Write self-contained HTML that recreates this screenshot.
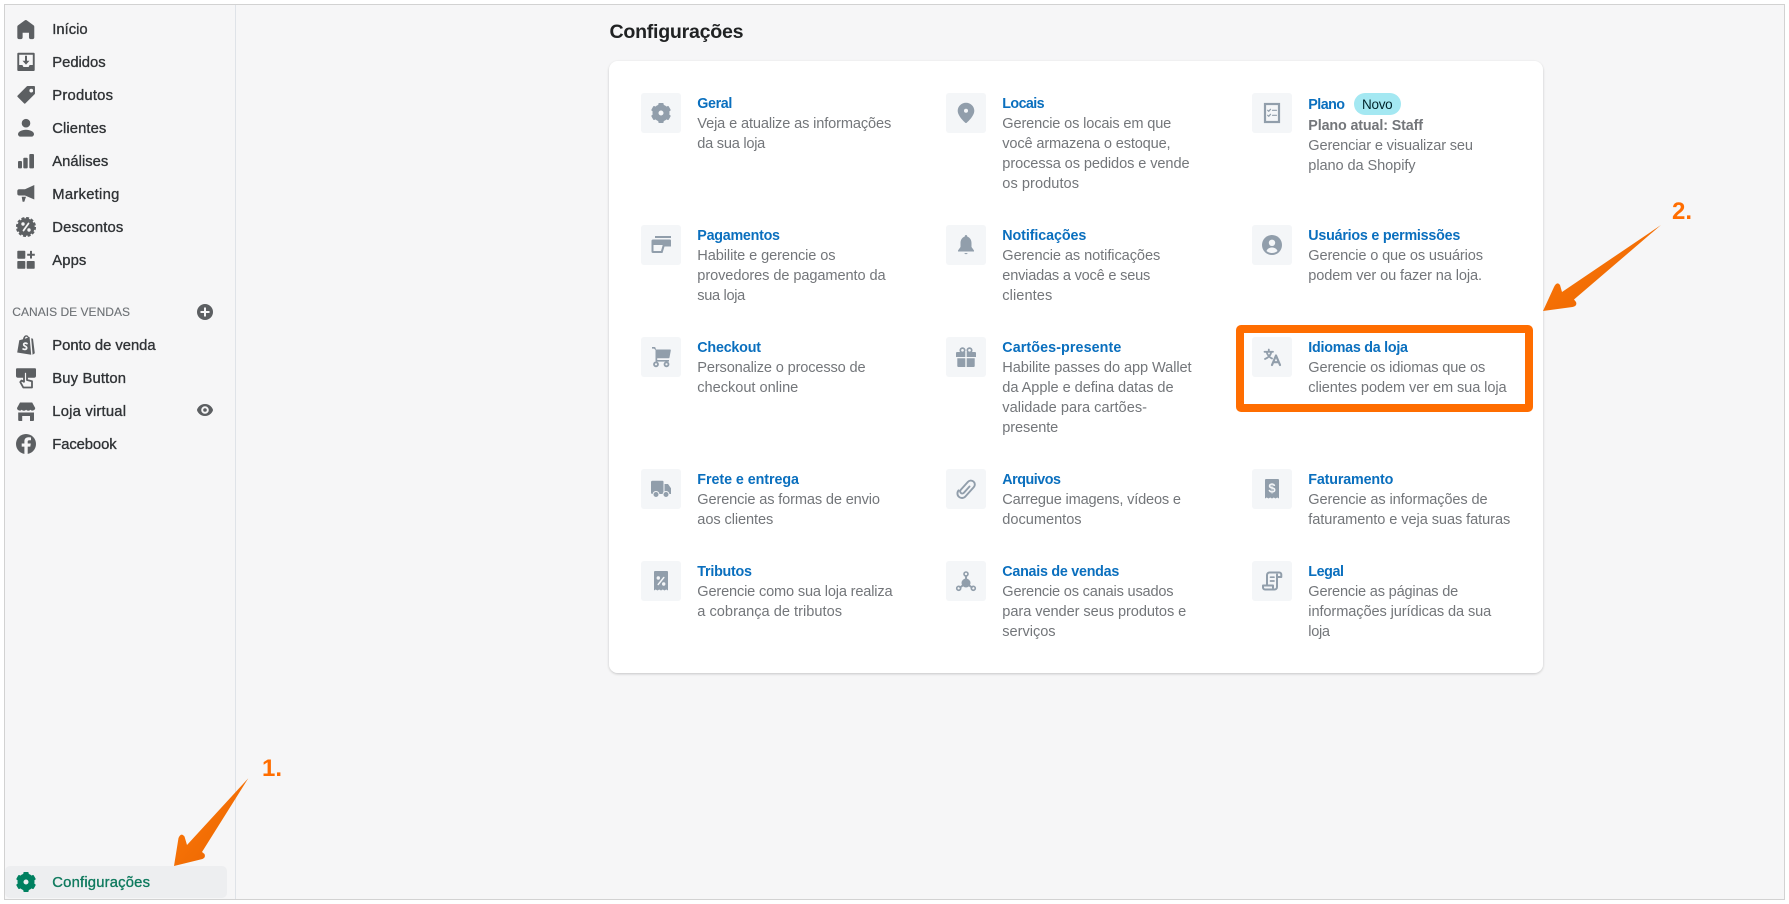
<!DOCTYPE html>
<html lang="pt-BR">
<head>
<meta charset="utf-8">
<title>Configurações</title>
<style>
html,body{margin:0;padding:0;background:#fff;width:1789px;height:904px;overflow:hidden}
svg{display:block;filter:blur(.35px)}
text{font-family:"Liberation Sans",Arial,sans-serif;white-space:pre}
.n{font-size:14.8px;fill:#303336;stroke:#303336;stroke-width:.34px}
.g{font-size:14.8px;fill:#0f7a5e;stroke:#0f7a5e;stroke-width:.34px}
.s{font-size:12px;fill:#6d7175;stroke:#6d7175;stroke-width:.12px}
.t{font-size:14.3px;fill:#0a6fbe;font-weight:700}
.d{font-size:14.6px;fill:#73767a}
.b{font-size:14.3px;fill:#73767a;font-weight:700}
.h{font-size:19.6px;fill:#202223;font-weight:700}
.o{font-size:24px;fill:#ff6d00;font-weight:700}
.ni{fill:#5c5f62}
.ti{fill:#919eab}
.tile{fill:#f4f6f8}
.ln{fill:none;stroke:#919eab;stroke-linecap:round;stroke-linejoin:round}
</style>
</head>
<body>
<svg width="1789" height="904" viewBox="0 0 1789 904" xmlns="http://www.w3.org/2000/svg">
<defs>
<g id="gear">
<circle cx="0" cy="0" r="5.500" fill="none" stroke="currentColor" stroke-width="6"/>
<g fill="currentColor">
<rect x="-2.700" y="-10" width="5.400" height="4.500" rx="1"/>
<rect x="-2.700" y="-10" width="5.400" height="4.500" rx="1" transform="rotate(60)"/>
<rect x="-2.700" y="-10" width="5.400" height="4.500" rx="1" transform="rotate(120)"/>
<rect x="-2.700" y="-10" width="5.400" height="4.500" rx="1" transform="rotate(180)"/>
<rect x="-2.700" y="-10" width="5.400" height="4.500" rx="1" transform="rotate(240)"/>
<rect x="-2.700" y="-10" width="5.400" height="4.500" rx="1" transform="rotate(300)"/>
</g>
</g>
<filter id="sh" x="-2%" y="-2%" width="104%" height="104%"><feDropShadow dx="0" dy="1" stdDeviation="1.200" flood-color="#000" flood-opacity=".2"/></filter>
<linearGradient id="ar1" x1="0" y1="0" x2="1" y2="1"><stop offset="0" stop-color="#ff7a0a"/><stop offset="1" stop-color="#e86400"/></linearGradient>
</defs>

<!-- frame -->
<rect x="4.500" y="4.500" width="1780" height="895" fill="#f6f6f7" stroke="#d2d2d2"/>
<line x1="235.500" y1="5" x2="235.500" y2="899" stroke="#dfe3e8"/>
<rect x="5" y="866" width="222" height="32" rx="5" fill="#edeef0"/>

<!-- nav icons -->
<path class="ni" transform="translate(15.200 19) scale(1.060)" d="M18 7.261V17.500c0 .841-.672 1.500-1.500 1.500h-2c-.828 0-1.500-.659-1.500-1.500V13H7v4.477C7 18.318 6.328 19 5.500 19h-2c-.828 0-1.500-.682-1.500-1.523V7.261a1.500 1.500 0 0 1 .615-1.210l6.590-4.820a1.481 1.481 0 0 1 1.590 0l6.590 4.820A1.500 1.500 0 0 1 18 7.260z"/>
<g class="ni" transform="translate(16 52)">
<path fill-rule="evenodd" d="M2.300 .7h15.400a1 1 0 0 1 1 1V18a1 1 0 0 1-1 1H2.300a1 1 0 0 1-1-1V1.700a1 1 0 0 1 1-1zM3.200 2.800v10.200h3.200l1 2h5.200l1-2h3.200V2.800z"/>
<path d="M9 3.800h2v5h2.500L10 12.600 6.500 8.800H9z"/>
</g>
<path class="ni" transform="translate(17.300 86) scale(.93)" fill-rule="evenodd" d="M18 0h-7a1 1 0 0 0-.7.3l-10 10a1 1 0 0 0 0 1.400l7 7a1 1 0 0 0 1.400 0l10-10A1 1 0 0 0 19 8V1a1 1 0 0 0-1-1zm-3 7a2 2 0 1 1 0-4 2 2 0 0 1 0 4z"/>
<path class="ni" transform="translate(16 117.300)" d="M10 10.200a4.300 4.300 0 1 0 0-8.600 4.300 4.300 0 0 0 0 8.600zm0 2.300c-4 0-8 1.800-8 4.500 0 1 1 2.300 2 2.300h12c1 0 2-1.300 2-2.300 0-2.700-4-4.500-8-4.500z"/>
<g class="ni">
<rect x="18" y="161" width="4" height="7.400" rx="1"/>
<rect x="23.300" y="157.700" width="4.400" height="10.700" rx="1"/>
<rect x="29.300" y="154" width="4.700" height="14.400" rx="1"/>
<path d="M34.300 185V199.500L25 195.500H19.200A1.900 1.900 0 0 1 17.300 193.600V191.200A1.900 1.900 0 0 1 19.200 189.300H25Z"/>
<path d="M21.700 196.700H26L24.300 201.700H22.600Z"/>
<circle cx="26" cy="227" r="8.700"/>
<circle cx="26" cy="227" r="9.200" fill="none" stroke="#5c5f62" stroke-width="1.700" stroke-dasharray="3 1.800"/>
<rect x="17.300" y="250.700" width="8" height="8" rx=".8"/>
<rect x="17.300" y="261" width="8" height="7.800" rx=".8"/>
<rect x="26.700" y="261" width="8" height="7.800" rx=".8"/>
<path d="M30 250.900h2v2.800h2.800v2H32v2.800h-2v-2.800h-2.800v-2H30z"/>
</g>
<path d="M28.500 223.500L23.500 230.500" stroke="#f6f6f7" stroke-width="1.800" stroke-linecap="round"/>
<circle cx="23" cy="224" r="1.700" fill="#f6f6f7"/><circle cx="29" cy="230" r="1.700" fill="#f6f6f7"/>

<!-- sales channel icons -->
<g class="ni" transform="translate(16 335)">
<path d="M1.200 17.500L3.300 5.300 7 4.200C7.300 2 8.700 .3 10.300 .3c1 0 1.800.6 2.300 1.600l1 .2L15.200 19.800 1.200 17.500zM8.800 3.700l3-.9c-.3-.8-.8-1.200-1.500-1.200-.7 0-1.200.9-1.500 2.100z"/>
<path d="M15.200 3.300l1.800.5 1.800 14.500-2.200 1.400z"/>
<path d="M11 8.600c-1.500-.9-3.300-.4-3.300 1 0 1.600 3 1.400 3 3.300 0 1.500-1.900 2-3.600 1.100" fill="none" stroke="#f6f6f7" stroke-width="1.700" stroke-linecap="round"/>
</g>
<g transform="translate(16 368.300)">
<path class="ni" d="M1 0h18a1 1 0 0 1 1 1v6.500a2 2 0 0 1-2 2H2a2 2 0 0 1-2-2V1a1 1 0 0 1 1-1z"/>
<path d="M8 5v8.500L5.600 12.200 4.300 13.800 7.300 19.200H16V13L11 11.700V5a1.500 1.500 0 0 0-3 0z" fill="#f6f6f7" stroke="#5c5f62" stroke-width="1.800" stroke-linejoin="round"/>
</g>
<g class="ni" transform="translate(16 402)">
<path d="M4 .5h12.200L19.200 6a2.700 2.700 0 0 1-4.700 1.700 2.900 2.900 0 0 1-4.400 0 2.900 2.900 0 0 1-4.400 0A2.700 2.700 0 0 1 1 6z"/>
<path d="M2.200 10.500h15.800v7.500a1 1 0 0 1-1 1H14v-5H6.200v5H3.200a1 1 0 0 1-1-1z"/>
</g>
<circle class="ni" cx="26" cy="444" r="10"/>
<path d="M27.700 454V446.600H30.300L30.800 443.500H27.700V441.600C27.700 440.700 28.100 440.200 29.300 440.200H31V437.500C30.500 437.400 29.500 437.300 28.500 437.300C26 437.300 24.400 438.800 24.400 441.200V443.500H21.700V446.600H24.400V454Z" fill="#f6f6f7"/>
<circle class="ni" cx="205" cy="312" r="8"/>
<path d="M204 307.500h2v3.500h3.500v2H206v3.500h-2V313h-3.500v-2h3.500z" fill="#f6f6f7"/>
<path class="ni" fill-rule="evenodd" d="M205 404c5 0 7.700 4 8 6-.3 2-3 6-8 6s-7.700-4-8-6c.3-2 3-6 8-6zm0 2.200a3.800 3.800 0 1 0 0 7.600 3.800 3.800 0 0 0 0-7.600zm0 2a1.800 1.800 0 1 1 0 3.600 1.800 1.800 0 0 1 0-3.600z"/>
<use href="#gear" x="26" y="882" color="#008060"/>

<!-- nav text -->
<text class="n" x="52.300" y="34" textLength="35.300">Início</text>
<text class="n" x="52.300" y="67" textLength="53.300">Pedidos</text>
<text class="n" x="52.300" y="100" textLength="60.700">Produtos</text>
<text class="n" x="52.300" y="133" textLength="54">Clientes</text>
<text class="n" x="52.300" y="166" textLength="56">Análises</text>
<text class="n" x="52.300" y="199" textLength="67">Marketing</text>
<text class="n" x="52.300" y="232" textLength="71">Descontos</text>
<text class="n" x="52.300" y="265" textLength="34">Apps</text>
<text class="s" x="12.300" y="316" textLength="117.700">CANAIS DE VENDAS</text>
<text class="n" x="52.300" y="350" textLength="103.300">Ponto de venda</text>
<text class="n" x="52.300" y="383" textLength="73.700">Buy Button</text>
<text class="n" x="52.300" y="416" textLength="73.700">Loja virtual</text>
<text class="n" x="52.300" y="449" textLength="64.300">Facebook</text>
<text class="g" x="52.300" y="887" textLength="97.700">Configurações</text>

<!-- heading and card -->
<text class="h" x="609.500" y="38" textLength="134">Configurações</text>
<rect x="609" y="61" width="934" height="612" rx="9" fill="#fff" filter="url(#sh)"/>

<!-- tiles -->
<g class="tile">
<rect x="641" y="93" width="40" height="40" rx="3"/><rect x="946" y="93" width="40" height="40" rx="3"/><rect x="1252" y="93" width="40" height="40" rx="3"/>
<rect x="641" y="225" width="40" height="40" rx="3"/><rect x="946" y="225" width="40" height="40" rx="3"/><rect x="1252" y="225" width="40" height="40" rx="3"/>
<rect x="641" y="337" width="40" height="40" rx="3"/><rect x="946" y="337" width="40" height="40" rx="3"/><rect x="1252" y="337" width="40" height="40" rx="3"/>
<rect x="641" y="469" width="40" height="40" rx="3"/><rect x="946" y="469" width="40" height="40" rx="3"/><rect x="1252" y="469" width="40" height="40" rx="3"/>
<rect x="641" y="561" width="40" height="40" rx="3"/><rect x="946" y="561" width="40" height="40" rx="3"/><rect x="1252" y="561" width="40" height="40" rx="3"/>
</g>

<!-- tile icons -->
<use href="#gear" x="661" y="113" color="#919eab"/>
<path class="ti" fill-rule="evenodd" transform="translate(956 102.700)" d="M10 0C5.500 0 1.700 3.600 1.700 8c0 5.500 7.300 11.700 7.600 12a1 1 0 0 0 1.400 0c.3-.3 7.600-6.500 7.600-12 0-4.400-3.800-8-8.300-8zm0 10a2 2 0 1 1 0-4 2 2 0 0 1 0 4z"/>
<g transform="translate(1262 103)">
<rect x="3" y="1" width="14" height="18" fill="none" stroke="#919eab" stroke-width="2.200"/>
<path class="ln" stroke-width="1.200" d="M5.700 7.300l1 1 1.800-2M10.500 7.300H14.500M5.700 12.300l1 1 1.800-2M10.500 12.300H14.500"/>
</g>
<g class="ti" transform="translate(651 235)">
<rect x="4" y="1" width="16" height="2"/>
<path fill-rule="evenodd" d="M2 4.500H19a1 1 0 0 1 1 1v6H13.500L11.500 18H2A1.500 1.500 0 0 1 .5 16.500V6A1.500 1.500 0 0 1 2 4.500zM2.500 10v6H10l1.700-6z"/>
</g>
<g class="ti" transform="translate(956 235)">
<path d="M10 0a1.200 1.200 0 0 0-1.200 1.500C6 2.500 4.500 5 4.500 8v4L2 15.500v1H18v-1L15.500 12V8c0-3-1.500-5.500-4.300-6.500A1.200 1.200 0 0 0 10 0z"/>
<path d="M8 18h4l-2 1.400z"/>
</g>
<g transform="translate(1262 235)">
<circle class="ti" cx="10" cy="10" r="10"/>
<circle cx="10" cy="7.800" r="3.200" fill="#f4f6f8"/>
<path d="M4.500 16c1-2.500 3-3.500 5.500-3.500s4.500 1 5.500 3.500c-1.500 1.300-3.500 2-5.500 2s-4-.7-5.500-2z" fill="#f4f6f8"/>
</g>
<g transform="translate(651 347)">
<path class="ti" d="M1 0H3.500A1 1 0 0 1 4.500 .8L5 2.500H19a.8.8 0 0 1 .8 1L18.500 10.500a1 1 0 0 1-1 .8H6.200V13H18v1.600H5.200A.8.800 0 0 1 4.500 13.800V3L3 1.600H1z"/>
<circle cx="5" cy="17.300" r="2" fill="none" stroke="#919eab" stroke-width="1.800"/>
<circle cx="15.500" cy="17.300" r="2" fill="none" stroke="#919eab" stroke-width="1.800"/>
</g>
<g transform="translate(956 347)">
<path class="ti" d="M0 6a1 1 0 0 1 1-1h8.300v5H0zM10.700 5H19a1 1 0 0 1 1 1v4H10.700zM1.300 11.200H9.300V20H2.300a1 1 0 0 1-1-1zM10.700 11.200H18.700V19a1 1 0 0 1-1 1H10.700z"/>
<circle cx="6.500" cy="3.300" r="2.200" fill="none" stroke="#919eab" stroke-width="1.700"/>
<circle cx="13.500" cy="3.300" r="2.200" fill="none" stroke="#919eab" stroke-width="1.700"/>
</g>
<g transform="translate(1262 347)">
<path class="ln" stroke-width="1.800" d="M2.500 4.800H11M6.800 2.500V4.800M4.500 4.800c.8 3.300 3.300 5.800 5.500 6.700M9.300 4.800c-.5 3-2.800 5.700-6.300 7.200"/>
<path class="ln" stroke-width="2.200" d="M10 18L14 8.500 18 18M11.200 15.200h5.600"/>
</g>
<g transform="translate(651 479)">
<path class="ti" d="M1.500 1.700H11.500a1 1 0 0 1 1 1V15H1.500a1.500 1.500 0 0 1-1.500-1.500V3.200A1.500 1.500 0 0 1 1.500 1.700zM13.500 5H17l3 4.200V15H13.500z"/>
<circle cx="5" cy="15.500" r="3" class="ti" stroke="#f4f6f8" stroke-width="1"/>
<circle cx="15" cy="15.500" r="3" class="ti" stroke="#f4f6f8" stroke-width="1"/>
</g>
<path class="ln" stroke-width="1.600" transform="translate(956 479) rotate(42 10 10) translate(-2 -2) scale(1.200)" d="M10.800 6.500v7a1.800 1.800 0 0 1-3.600 0V4.500a3.300 3.300 0 0 1 6.600 0V15a3.800 3.800 0 0 1-7.600 0"/>
<g transform="translate(1262 479)">
<path class="ti" d="M4 0h12a1 1 0 0 1 1 1V19.500l-1.700-1-1.800 1-1.700-1-1.800 1-1.800-1-1.700 1-1.800-1-1.700 1V1a1 1 0 0 1 1-1z"/>
<text x="10" y="13.500" text-anchor="middle" style="font-size:13px;font-weight:700;fill:#f4f6f8">$</text>
</g>
<g transform="translate(651 571)">
<path class="ti" d="M4 0h12a1 1 0 0 1 1 1V19.500l-1.700-1-1.800 1-1.700-1-1.800 1-1.800-1-1.700 1-1.800-1-1.700 1V1a1 1 0 0 1 1-1z"/>
<circle cx="7.300" cy="7" r="1.700" fill="#f4f6f8"/><circle cx="12.700" cy="13" r="1.700" fill="#f4f6f8"/>
<path d="M12.800 6.500L7.200 13.500" stroke="#f4f6f8" stroke-width="1.500" stroke-linecap="round"/>
</g>
<g transform="translate(956 571)">
<circle class="ti" cx="10" cy="12" r="4.500"/>
<path class="ln" stroke-width="1.900" d="M10 5V9M4.200 16.300L7.500 14M15.800 16.300L12.500 14"/>
<circle cx="10" cy="3" r="2" fill="none" stroke="#919eab" stroke-width="1.600"/>
<circle cx="2.700" cy="17.300" r="2" fill="none" stroke="#919eab" stroke-width="1.600"/>
<circle cx="17.300" cy="17.300" r="2" fill="none" stroke="#919eab" stroke-width="1.600"/>
</g>
<g transform="translate(1262 571)">
<path class="ln" stroke-width="2" d="M5 14.500V4a2.500 2.500 0 0 1 2.500-2.500H17.300a2 2 0 0 1 2 2V6H15M15 3.500V16a2.500 2.500 0 0 1-2.500 2.500H3a2 2 0 0 1-2-2V14.500H11V17"/>
<path class="ln" stroke-width="1.700" d="M8.500 6.200h3.500M8.500 10h3.500"/>
</g>

<!-- item text -->
<text class="t" x="697.300" y="108" textLength="35">Geral</text>
<text class="d" x="697.300" y="128" textLength="194">Veja e atualize as informações</text>
<text class="d" x="697.300" y="148" textLength="68">da sua loja</text>

<text class="t" x="1002.300" y="108" textLength="42.300">Locais</text>
<text class="d" x="1002.300" y="128" textLength="169">Gerencie os locais em que</text>
<text class="d" x="1002.300" y="148" textLength="168.300">você armazena o estoque,</text>
<text class="d" x="1002.300" y="168" textLength="187.300">processa os pedidos e vende</text>
<text class="d" x="1002.300" y="188" textLength="76.700">os produtos</text>

<text class="t" x="1308.300" y="109" textLength="36.700">Plano</text>
<rect x="1354" y="93" width="47" height="22" rx="11" fill="#a4e8f2"/>
<text x="1362" y="109" textLength="30.700" style="font-size:13.500px;fill:#00242b">Novo</text>
<text class="b" x="1308.300" y="130" textLength="114.700">Plano atual: Staff</text>
<text class="d" x="1308.300" y="150" textLength="164.700">Gerenciar e visualizar seu</text>
<text class="d" x="1308.300" y="170" textLength="107.300">plano da Shopify</text>

<text class="t" x="697.300" y="240" textLength="82.700">Pagamentos</text>
<text class="d" x="697.300" y="260" textLength="138.300">Habilite e gerencie os</text>
<text class="d" x="697.300" y="280" textLength="188.300">provedores de pagamento da</text>
<text class="d" x="697.300" y="300" textLength="48">sua loja</text>

<text class="t" x="1002.300" y="240" textLength="84">Notificações</text>
<text class="d" x="1002.300" y="260" textLength="158">Gerencie as notificações</text>
<text class="d" x="1002.300" y="280" textLength="148">enviadas a você e seus</text>
<text class="d" x="1002.300" y="300" textLength="50">clientes</text>

<text class="t" x="1308.300" y="240" textLength="152">Usuários e permissões</text>
<text class="d" x="1308.300" y="260" textLength="174.700">Gerencie o que os usuários</text>
<text class="d" x="1308.300" y="280" textLength="173.700">podem ver ou fazer na loja.</text>

<text class="t" x="697.300" y="352" textLength="63.700">Checkout</text>
<text class="d" x="697.300" y="372" textLength="168.300">Personalize o processo de</text>
<text class="d" x="697.300" y="392" textLength="101">checkout online</text>

<text class="t" x="1002.300" y="352" textLength="119">Cartões-presente</text>
<text class="d" x="1002.300" y="372" textLength="189.300">Habilite passes do app Wallet</text>
<text class="d" x="1002.300" y="392" textLength="171.300">da Apple e defina datas de</text>
<text class="d" x="1002.300" y="412" textLength="144.700">validade para cartões-</text>
<text class="d" x="1002.300" y="432" textLength="56">presente</text>

<text class="t" x="1308.300" y="352" textLength="99.700">Idiomas da loja</text>
<text class="d" x="1308.300" y="372" textLength="177">Gerencie os idiomas que os</text>
<text class="d" x="1308.300" y="392" textLength="198.300">clientes podem ver em sua loja</text>

<text class="t" x="697.300" y="484" textLength="101.700">Frete e entrega</text>
<text class="d" x="697.300" y="504" textLength="182.700">Gerencie as formas de envio</text>
<text class="d" x="697.300" y="524" textLength="76">aos clientes</text>

<text class="t" x="1002.300" y="484" textLength="58.700">Arquivos</text>
<text class="d" x="1002.300" y="504" textLength="178.700">Carregue imagens, vídeos e</text>
<text class="d" x="1002.300" y="524" textLength="79.300">documentos</text>

<text class="t" x="1308.300" y="484" textLength="85">Faturamento</text>
<text class="d" x="1308.300" y="504" textLength="179.300">Gerencie as informações de</text>
<text class="d" x="1308.300" y="524" textLength="202">faturamento e veja suas faturas</text>

<text class="t" x="697.300" y="576" textLength="54.700">Tributos</text>
<text class="d" x="697.300" y="596" textLength="195.300">Gerencie como sua loja realiza</text>
<text class="d" x="697.300" y="616" textLength="144.700">a cobrança de tributos</text>

<text class="t" x="1002.300" y="576" textLength="117">Canais de vendas</text>
<text class="d" x="1002.300" y="596" textLength="171.300">Gerencie os canais usados</text>
<text class="d" x="1002.300" y="616" textLength="184">para vender seus produtos e</text>
<text class="d" x="1002.300" y="636" textLength="53.300">serviços</text>

<text class="t" x="1308.300" y="576" textLength="35.700">Legal</text>
<text class="d" x="1308.300" y="596" textLength="150">Gerencie as páginas de</text>
<text class="d" x="1308.300" y="616" textLength="183">informações jurídicas da sua</text>
<text class="d" x="1308.300" y="636" textLength="21.700">loja</text>

<!-- annotations -->
<rect x="1240" y="329" width="289" height="79" rx="1" fill="none" stroke="#ff6d00" stroke-width="8"/>
<path fill="url(#ar1)" d="M248.300 778.300L202 852L204.500 854Q206 857.500 202.500 859L174 866L178.500 838Q181 832 184.500 836.500L187 845Z"/>
<path fill="url(#ar1)" d="M1661 225L1574 299.500L1576 302Q1577.500 306 1572.500 307L1543 311L1554 287Q1557 281 1560 285L1562 292Z"/>
<text class="o" x="262" y="776">1.</text>
<text class="o" x="1672" y="219">2.</text>
</svg>
</body>
</html>
